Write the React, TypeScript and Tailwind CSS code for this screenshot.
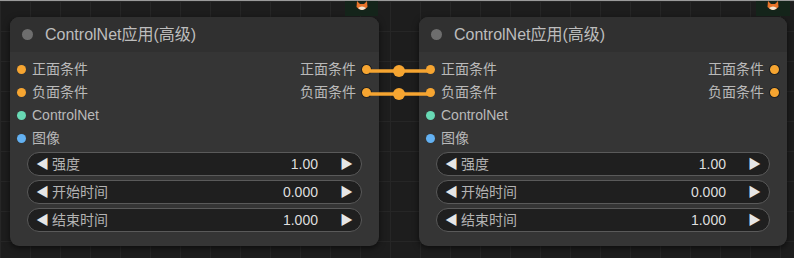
import React from "react";

const font = { fontFamily: '"Liberation Sans", "Noto Sans CJK SC", sans-serif' };

type Slot = { label: string; color: string };

const inputs: Slot[] = [
  { label: "正面条件", color: "bg-[#f6a531]" },
  { label: "负面条件", color: "bg-[#f6a531]" },
  { label: "ControlNet", color: "bg-[#68d9b4]" },
  { label: "图像", color: "bg-[#63b1f2]" },
];

const outputs = ["正面条件", "负面条件"];

const widgets = [
  { label: "强度", value: "1.00" },
  { label: "开始时间", value: "0.000" },
  { label: "结束时间", value: "1.000" },
];

function Fox() {
  return (
    <svg width="12" height="11" viewBox="0 0 12 11">
      <path d="M1 0 L4 3 L8 3 L11 0 L11.5 6 Q6 12 0.5 6 Z" fill="#e8742a" />
      <path d="M2 7 Q6 4 10 7 Q6 11 2 7 Z" fill="#f4e6d4" />
    </svg>
  );
}

function Node() {
  return (
    <div className="flex h-[229px] flex-col overflow-hidden rounded-[9px] bg-[#353535] shadow-[0_2px_6px_rgba(0,0,0,0.6)]">
      <div className="flex h-[35px] shrink-0 items-center gap-[12px] bg-[#303030] pl-[12px] text-[16px] text-[#bdbdbd]">
        <span className="h-[11px] w-[11px] rounded-full bg-[#6e6e6e]" />
        <span>ControlNet应用(高级)</span>
      </div>
      <div className="flex flex-col pt-[6px]">
        {inputs.map((s, i) => (
          <div key={s.label} className="flex h-[23px] items-center justify-between pl-[7px] pr-[8px] text-[14px]">
            <div className="flex items-center gap-[6px] text-[#b9b9b9]">
              <span className={`h-[9px] w-[9px] rounded-full ${s.color}`} />
              <span>{s.label}</span>
            </div>
            {outputs[i] && (
              <div className="flex items-center gap-[6px] text-[#b9b9b9]">
                <span>{outputs[i]}</span>
                <span className="h-[9px] w-[9px] rounded-full border-[2px] border-[#f6a531] bg-[#f6a531] ring-1 ring-[#222]" />
              </div>
            )}
          </div>
        ))}
      </div>
      <div className="mt-[2px] flex flex-col gap-[4px] px-[17px]">
        {widgets.map((w) => (
          <div
            key={w.label}
            className="flex h-[24px] items-center rounded-full border border-[#5a5a5a] bg-[#1f1f1f] pl-[8px] pr-[8px] text-[14px]"
          >
            <span className="text-[13px] text-[#e6e6e6]">◀</span>
            <span className="ml-[3px] text-[#b3b3b3]">{w.label}</span>
            <span className="ml-auto text-[#dedede]">{w.value}</span>
            <span className="ml-[22px] text-[13px] text-[#e6e6e6]">▶</span>
          </div>
        ))}
      </div>
    </div>
  );
}

export default function App() {
  return (
    <div
      style={font}
      className="relative h-[258px] w-[794px] overflow-hidden border-t border-[#9a9a9a] bg-[#1d1d1d] bg-[linear-gradient(#262626_1px,transparent_1px),linear-gradient(90deg,#262626_1px,transparent_1px)] bg-[size:30px_30px]"
    >
      <div className="absolute left-[345px] top-0 flex h-[15px] w-[33px] justify-center bg-[#14241a]">
        <Fox />
      </div>
      <div className="absolute left-[756px] top-0 flex h-[15px] w-[34px] justify-center bg-[#14241a]">
        <Fox />
      </div>
      <div className="flex gap-[40px] pl-[10px] pt-[16px]">
        <div className="w-[369px]">
          <Node />
        </div>
        <div className="w-[368px]">
          <Node />
        </div>
      </div>
      <svg className="absolute left-[370px] top-[60px]" width="58" height="40" viewBox="0 0 58 40">
        <line x1="0" y1="10" x2="58" y2="10" stroke="#f6a531" strokeWidth="3.5" />
        <line x1="0" y1="33" x2="58" y2="33" stroke="#f6a531" strokeWidth="3.5" />
        <circle cx="29" cy="10" r="6" fill="#f6a531" />
        <circle cx="29" cy="33" r="6" fill="#f6a531" />
      </svg>
    </div>
  );
}
